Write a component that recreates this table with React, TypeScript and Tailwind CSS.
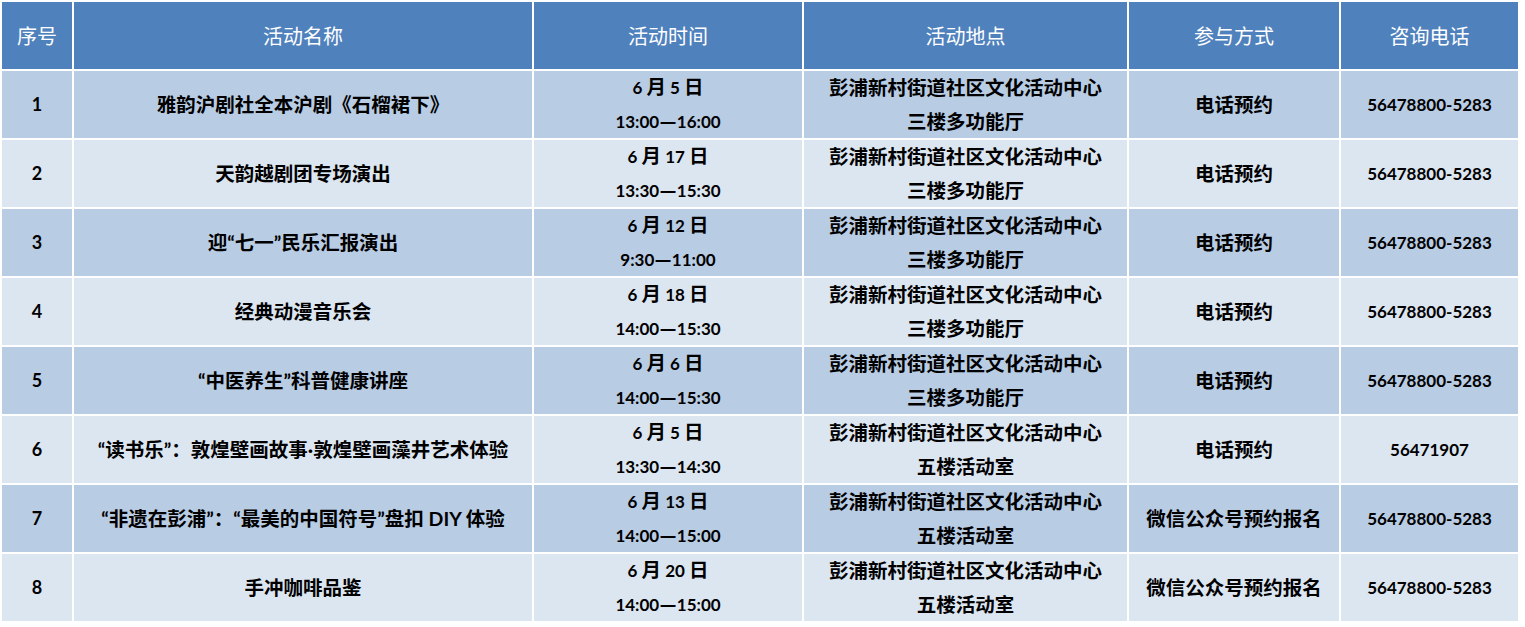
import React from "react";

type Row = {
  no: string;
  name: string;
  month: string;
  day: string;
  start: string;
  end: string;
  place2: string;
  mode: string;
  phone: string;
};

const rows: Row[] = [
  { no: "1", name: "雅韵沪剧社全本沪剧《石榴裙下》", month: "6", day: "5", start: "13:00", end: "16:00", place2: "三楼多功能厅", mode: "电话预约", phone: "56478800-5283" },
  { no: "2", name: "天韵越剧团专场演出", month: "6", day: "17", start: "13:30", end: "15:30", place2: "三楼多功能厅", mode: "电话预约", phone: "56478800-5283" },
  { no: "3", name: "迎“七一”民乐汇报演出", month: "6", day: "12", start: "9:30", end: "11:00", place2: "三楼多功能厅", mode: "电话预约", phone: "56478800-5283" },
  { no: "4", name: "经典动漫音乐会", month: "6", day: "18", start: "14:00", end: "15:30", place2: "三楼多功能厅", mode: "电话预约", phone: "56478800-5283" },
  { no: "5", name: "“中医养生”科普健康讲座", month: "6", day: "6", start: "14:00", end: "15:30", place2: "三楼多功能厅", mode: "电话预约", phone: "56478800-5283" },
  { no: "6", name: "“读书乐”：敦煌壁画故事·敦煌壁画藻井艺术体验", month: "6", day: "5", start: "13:30", end: "14:30", place2: "五楼活动室", mode: "电话预约", phone: "56471907" },
  { no: "7", name: "“非遗在彭浦”：“最美的中国符号”盘扣 DIY 体验", month: "6", day: "13", start: "14:00", end: "15:00", place2: "五楼活动室", mode: "微信公众号预约报名", phone: "56478800-5283" },
  { no: "8", name: "手冲咖啡品鉴", month: "6", day: "20", start: "14:00", end: "15:00", place2: "五楼活动室", mode: "微信公众号预约报名", phone: "56478800-5283" },
];

const headers = ["序号", "活动名称", "活动时间", "活动地点", "参与方式", "咨询电话"];

const font = { fontFamily: 'Lato, "Noto Sans CJK SC", sans-serif' };

export default function App() {
  return (
    <div className="w-[1525px] h-[627px] bg-white" style={font}>
      <div className="grid grid-cols-[70px_458px_268px_323px_210px_177px] auto-rows-[67px] gap-[2px] p-[2px] w-fit bg-white">
        {headers.map((h) => (
          <div key={h} className="bg-[#4f81bd] text-white text-[20px] flex items-center justify-center">
            {h}
          </div>
        ))}
        {rows.map((r, i) => {
          const bg = i % 2 === 0 ? "bg-[#b8cce4]" : "bg-[#dce6f1]";
          const cell = `${bg} text-black flex flex-col items-center justify-center font-bold`;
          return (
            <React.Fragment key={r.no}>
              <div className={`${cell} text-[18px]`}>{r.no}</div>
              <div className={`${cell} text-[19.5px]`}>{r.name}</div>
              <div className={`${cell} text-[17px] leading-[34px]`}>
                <div className="whitespace-pre">
                  {r.month} <span className="text-[19.5px]">月</span> {r.day} <span className="text-[19.5px]">日</span>
                </div>
                <div className="flex items-center">
                  <span>{r.start}</span>
                  <span className="text-[22px] leading-[34px]">—</span>
                  <span>{r.end}</span>
                </div>
              </div>
              <div className={`${cell} text-[19.5px] leading-[34px]`}>
                <div>彭浦新村街道社区文化活动中心</div>
                <div>{r.place2}</div>
              </div>
              <div className={`${cell} text-[19.5px]`}>{r.mode}</div>
              <div className={`${cell} text-[17px]`}>{r.phone}</div>
            </React.Fragment>
          );
        })}
      </div>
    </div>
  );
}
